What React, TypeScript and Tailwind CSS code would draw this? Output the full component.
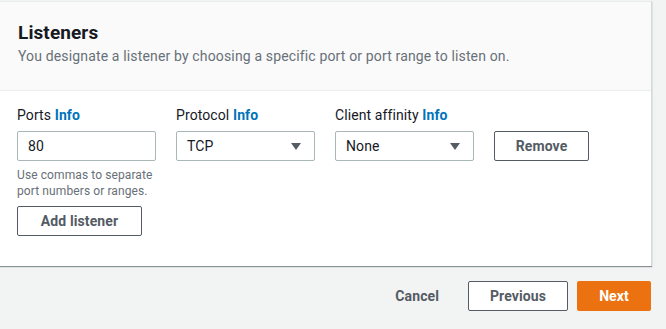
import React from 'react'

function Label({ text }: { text: string }) {
  return (
    <div className="text-[14px] leading-[20px] text-[#16191f]">
      {text} <span className="font-bold text-[#0073bb]">Info</span>
    </div>
  )
}

function Select({ value }: { value: string }) {
  return (
    <div className="mt-[6px] flex h-[30px] w-[139px] items-center justify-between rounded-[2px] border border-[#aab7b8] bg-white pl-[10px] pr-[13px] text-[14px] text-[#16191f]">
      <span>{value}</span>
      <svg width="10" height="7" viewBox="0 0 10 7">
        <polygon points="0,0 10,0 5,7" fill="#545b64" />
      </svg>
    </div>
  )
}

export default function App() {
  return (
    <div className="h-[329px] w-[666px] overflow-hidden bg-[#f2f3f3] font-['Roboto',sans-serif] tracking-[0.1px]">
      <div className="w-[652px] pt-[1px]">
        <div className="border-r border-[#d5dbdb] bg-white shadow-[0_1px_1px_0_rgba(0,28,36,0.45)]">
          {/* header */}
          <div className="border-b border-t border-[#eaeded] bg-[#fafafa] px-[18px] pb-[24px] pt-[19px]">
            <h2 className="text-[19px] font-bold leading-[23px] text-[#16191f]">Listeners</h2>
            <p className="mt-[2px] text-[14px] leading-[20px] tracking-[0.15px] text-[#687078]">
              You designate a listener by choosing a specific port or port range to listen on.
            </p>
          </div>

          {/* listener row */}
          <div className="px-[17px] pb-[30px] pt-[14px]">
            <div className="flex items-start gap-[20px]">
              <div className="w-[139px]">
                <Label text="Ports" />
                <div className="mt-[6px] flex h-[30px] items-center rounded-[2px] border border-[#aab7b8] bg-white pl-[10px] text-[14px] text-[#16191f]">
                  80
                </div>
                <p className="mt-[6px] text-[12px] leading-[16px] text-[#687078]">
                  Use commas to separate port numbers or ranges.
                </p>
              </div>
              <div>
                <Label text="Protocol" />
                <Select value="TCP" />
              </div>
              <div>
                <Label text="Client affinity" />
                <Select value="None" />
              </div>
              <button className="mt-[26px] h-[30px] w-[95px] rounded-[2px] border border-[#545b64] bg-white text-[14px] font-bold text-[#545b64]">
                Remove
              </button>
            </div>
            <button className="mt-[7px] h-[30px] w-[125px] rounded-[2px] border border-[#545b64] bg-white text-[14px] font-bold text-[#545b64]">
              Add listener
            </button>
          </div>
        </div>

        {/* footer */}
        <div className="mt-[15px] flex items-center justify-end gap-[9px] pr-[1px]">
          <button className="h-[30px] px-[20px] text-[14px] font-bold text-[#545b64]">Cancel</button>
          <button className="h-[30px] w-[100px] rounded-[2px] border border-[#545b64] bg-white text-[14px] font-bold text-[#545b64]">
            Previous
          </button>
          <button className="h-[30px] w-[74px] rounded-[2px] bg-[#ec7211] text-[14px] font-bold text-white">
            Next
          </button>
        </div>
      </div>
    </div>
  )
}
